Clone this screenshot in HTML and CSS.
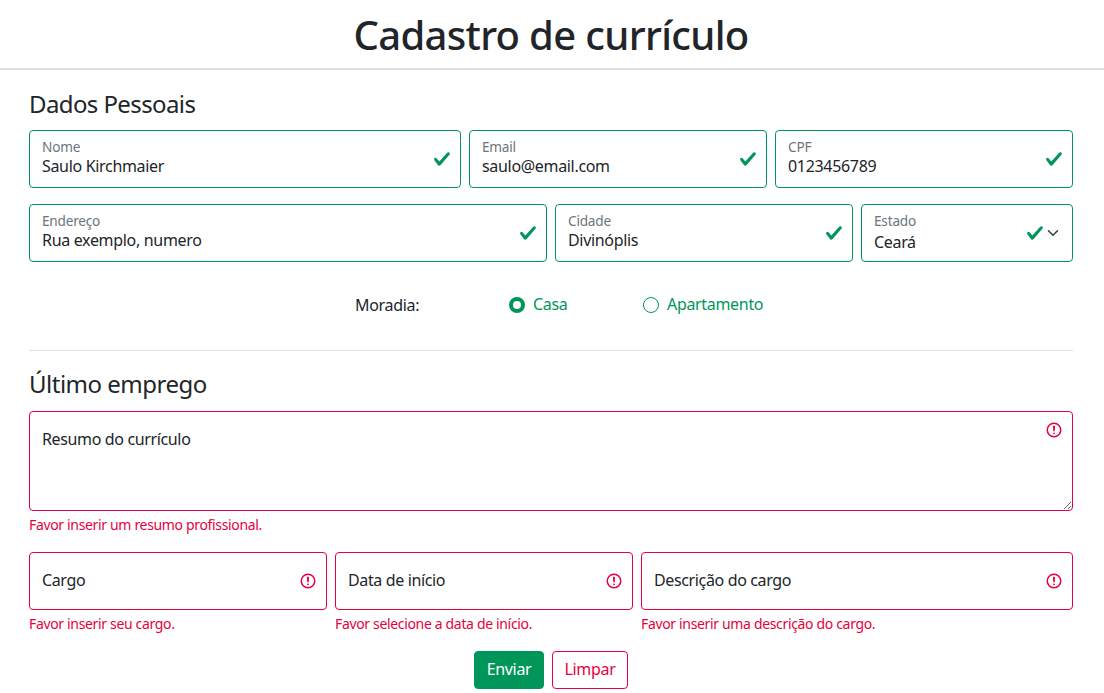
FILE: index.html
```html
<!DOCTYPE html>
<html lang="pt-BR">
<head>
<meta charset="utf-8">
<title>Cadastro de currículo</title>
<link rel="stylesheet" href="styles.css">
</head>
<body>
<header class="page-head"><h1>Cadastro de currículo</h1></header>
<svg class="defs" width="0" height="0" aria-hidden="true">
  <symbol id="ok" viewBox="0 0 8 8"><path fill="currentColor" d="M2.3 6.73.6 4.53c-.4-1.04.46-1.4 1.1-.8l1.1 1.4 3.4-3.8c.6-.63 1.6-.27 1.2.7l-4 4.6c-.43.5-.8.4-1.1.1z"/></symbol>
  <symbol id="bad" viewBox="0 0 12 12"><circle cx="6" cy="6" r="4.5" fill="none" stroke="currentColor"/><path fill="currentColor" stroke="currentColor" stroke-linejoin="round" d="M5.8 3.6h.4L6 6.5z"/><circle cx="6" cy="8.2" r=".6" fill="currentColor"/></symbol>
</svg>
<form class="form">
  <h2>Dados Pessoais</h2>
  <div class="row row-a">
    <div class="field valid"><input id="nome" value="Saulo Kirchmaier"><label for="nome">Nome</label><svg class="icon"><use href="#ok"/></svg></div>
    <div class="field valid"><input id="email" value="saulo@email.com"><label for="email">Email</label><svg class="icon"><use href="#ok"/></svg></div>
    <div class="field valid"><input id="cpf" value="0123456789"><label for="cpf">CPF</label><svg class="icon"><use href="#ok"/></svg></div>
  </div>
  <div class="row row-b">
    <div class="field valid"><input id="end" value="Rua exemplo, numero"><label for="end">Endereço</label><svg class="icon"><use href="#ok"/></svg></div>
    <div class="field valid"><input id="cidade" value="Divinóplis"><label for="cidade">Cidade</label><svg class="icon"><use href="#ok"/></svg></div>
    <div class="field valid"><select id="estado"><option>Ceará</option></select><label for="estado">Estado</label><svg class="icon icon-select"><use href="#ok"/></svg><svg class="chevron" viewBox="0 0 16 16"><path fill="none" stroke="currentColor" stroke-linecap="round" stroke-linejoin="round" stroke-width="2" d="m2 5 6 6 6-6"/></svg></div>
  </div>
  <div class="housing">
    <span class="housing-title">Moradia:</span>
    <label class="radio radio-casa"><input type="radio" name="moradia" checked>Casa</label>
    <label class="radio radio-apto"><input type="radio" name="moradia">Apartamento</label>
  </div>
  <hr class="divider">
  <h2 class="h2-job">Último emprego</h2>
  <div class="cell">
    <div class="field invalid"><textarea id="resumo"></textarea><label class="plain" for="resumo">Resumo do currículo</label><svg class="icon icon-area"><use href="#bad"/></svg></div>
    <p class="error">Favor inserir um resumo profissional.</p>
  </div>
  <div class="row row-c">
    <div class="cell">
      <div class="field invalid"><input id="cargo"><label class="plain" for="cargo">Cargo</label><svg class="icon"><use href="#bad"/></svg></div>
      <p class="error">Favor inserir seu cargo.</p>
    </div>
    <div class="cell">
      <div class="field invalid"><input id="data"><label class="plain" for="data">Data de início</label><svg class="icon"><use href="#bad"/></svg></div>
      <p class="error">Favor selecione a data de início.</p>
    </div>
    <div class="cell">
      <div class="field invalid"><input id="desc"><label class="plain" for="desc">Descrição do cargo</label><svg class="icon"><use href="#bad"/></svg></div>
      <p class="error">Favor inserir uma descrição do cargo.</p>
    </div>
  </div>
  <div class="actions">
    <button type="button" class="btn btn-send">Enviar</button>
    <button type="button" class="btn btn-clear">Limpar</button>
  </div>
</form>
</body>
</html>
```
FILE: styles.css
```css
* { box-sizing: border-box; }
html, body { margin: 0; overflow: hidden; }
body {
  font-family: "Noto Sans", sans-serif;
  font-size: 16px;
  line-height: 24px;
  letter-spacing: -0.32px;
  color: #212529;
  background: #fff;
}
.defs { position: absolute; }
.page-head {
  height: 70px;
  padding-right: 2px;
  border-bottom: 2px solid #dee2e6;
  display: flex;
  justify-content: center;
  align-items: center;
}
h1 { margin: 2px 0 0; font-size: 40px; line-height: 48px; font-weight: 500; letter-spacing: -0.67px; }
.form { padding: 0 31px 0 29px; }
h2 { margin: 19px 0 12px; font-size: 24px; line-height: 29px; font-weight: 400; letter-spacing: -0.6px; }
.h2-job { margin: 18px 0 13px; letter-spacing: -0.5px; }
.row { display: grid; gap: 8px; margin-bottom: 16px; }
.row-a { grid-template-columns: 432fr 298fr 298fr; }
.row-b { grid-template-columns: 518fr 298fr 212fr; margin-bottom: 0; }
.row-c { grid-template-columns: 298fr 298fr 432fr; margin: 0; }
.field { position: relative; }
.field input, .field select, .field textarea, .btn { letter-spacing: -0.32px; }
.field input, .field select {
  display: block;
  width: 100%;
  height: 58px;
  padding: 25px 12px 11px;
  font: inherit;
  line-height: 20px;
  color: inherit;
  background: #fff;
  border: 1px solid;
  border-radius: 4px;
  outline: 0;
  appearance: none;
}
.field select { padding-top: 25px; padding-bottom: 7px; line-height: 24px; }
.field textarea {
  display: block;
  width: 100%;
  height: 100px;
  padding: 16px 12px;
  font: inherit;
  background: #fff;
  border: 1px solid;
  border-radius: 4px;
  outline: 0;
}
.valid input, .valid select { border-color: #00965a; }
.invalid input, .invalid textarea { border-color: #e6003e; }
.field label {
  position: absolute;
  left: 13px;
  top: 7px;
  font-size: 13.6px;
  line-height: 20px;
  letter-spacing: -0.2px;
  color: #6c757d;
  pointer-events: none;
}
.field label.plain {
  top: 16px;
  font-size: 16px;
  line-height: 24px;
  letter-spacing: -0.36px;
  color: #212529;
}
.icon {
  position: absolute;
  right: 10px;
  top: 20px;
  width: 18px;
  height: 18px;
  pointer-events: none;
}
.icon-area { top: 10px; }
.icon-select { right: 29px; top: 20px; }
.valid .icon { color: #00965a; }
.invalid .icon { color: #e6003e; }
.chevron {
  position: absolute;
  right: 12px;
  top: 23px;
  width: 16px;
  height: 12px;
  color: #343a40;
  pointer-events: none;
}
.housing {
  display: flex;
  align-items: center;
  height: 24px;
  margin-top: 31px;
  padding-left: 326px;
}
.housing-title { width: 154px; }
.radio {
  display: flex;
  align-items: center;
  gap: 8px;
  padding-bottom: 2px;
  color: #00965a;
}
.radio-casa { width: 134px; }
.radio input {
  appearance: none;
  flex: none;
  width: 16px;
  height: 16px;
  margin: 2px 0 0;
  background: #fff;
  border: 1px solid #00965a;
  border-radius: 50%;
}
.radio input:checked { border: 4.5px solid #00965a; }
.divider { margin: 33px 0 0; border: 0; border-top: 1px solid #dee2e6; }
.error {
  margin: 3px 0 17px;
  font-size: 14px;
  line-height: 21px;
  letter-spacing: -0.34px;
  color: #e6003e;
}
.actions { display: flex; justify-content: center; gap: 8px; }
.btn {
  height: 38px;
  padding: 0 0 2px;
  font: inherit;
  border: 1px solid;
  border-radius: 4px;
}
.btn-send { width: 70px; color: #fff; background: #00965a; border-color: #00965a; }
.btn-clear { width: 76px; color: #e6003e; background: #fff; border-color: #e6003e; }
```
